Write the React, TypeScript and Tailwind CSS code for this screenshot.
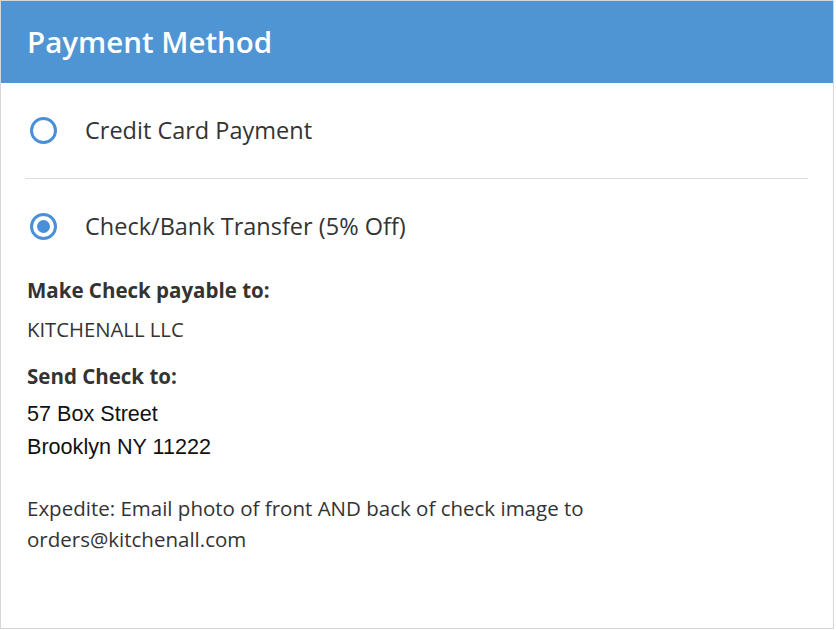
const open = { fontFamily: '"Open Sans", "Liberation Sans", sans-serif' };
const arial = { fontFamily: '"Liberation Sans", Arial, sans-serif' };

function Radio({ checked }: { checked?: boolean }) {
  return (
    <span className="flex h-[27px] w-[27px] shrink-0 items-center justify-center rounded-full border-[3px] border-[#4a90d9] bg-white">
      {checked && <span className="h-[13px] w-[13px] rounded-full bg-[#4a90d9]" />}
    </span>
  );
}

export default function App() {
  return (
    <div className="min-h-screen bg-white" style={open}>
      <div className="flex h-[629px] w-[834px] flex-col border border-[#d6d6d6] bg-white">
        {/* header */}
        <div className="flex h-[82px] items-center bg-[#4f94d3] px-[26px]">
          <h2 className="text-[29.5px] font-semibold text-white">Payment Method</h2>
        </div>

        <div className="flex flex-col pl-[24px] pr-[25px]">
          <label className="flex h-[95px] items-center gap-[28px] pl-[5px]">
            <Radio />
            <span className="text-[23.5px] text-[#333]">Credit Card Payment</span>
          </label>
          <div className="h-px bg-[#dcdcdc]" />
          <label className="flex h-[95px] items-center gap-[28px] pl-[5px]">
            <Radio checked />
            <span className="text-[23.5px] text-[#333]">Check/Bank Transfer (5% Off)</span>
          </label>

          <div className="flex flex-col pl-[2px] text-[#333]">
            <p className="mt-px text-[20.5px] font-bold leading-[30px]">Make Check payable to:</p>
            <p className="mt-[9px] text-[20.3px] leading-[30px]">KITCHENALL LLC</p>
            <p className="mt-[17px] text-[20.5px] font-bold leading-[30px]">Send Check to:</p>
            <div className="mt-[6px] text-[21.6px] leading-[33px] text-[#111]" style={arial}>
              <p>57 Box Street</p>
              <p>Brooklyn NY 11222</p>
            </div>
            <p className="mt-[30px] text-[20.5px] leading-[31px]">
              Expedite: Email photo of front AND back of check image to
              <br />
              orders@kitchenall.com
            </p>
          </div>
        </div>
      </div>
    </div>
  );
}
